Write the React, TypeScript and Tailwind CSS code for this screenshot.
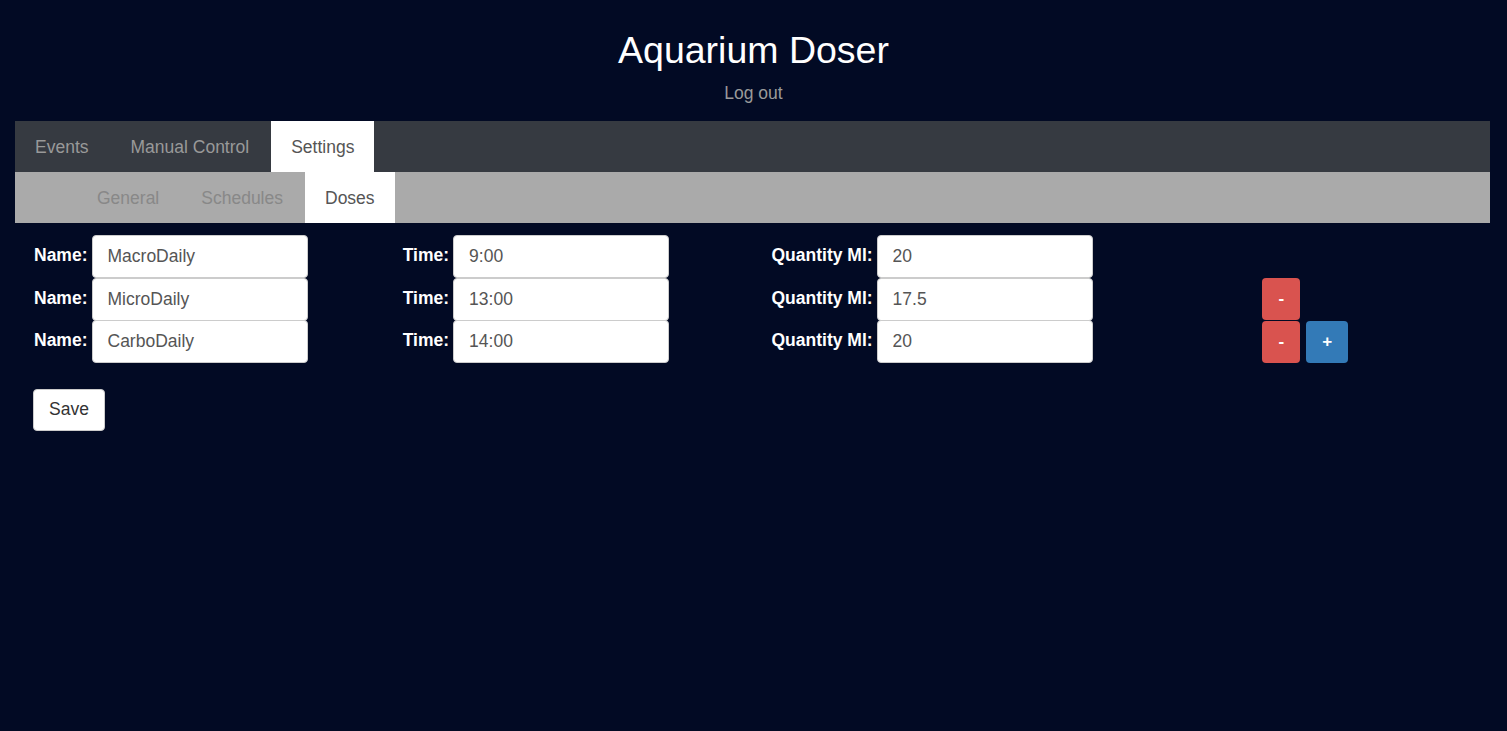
import React from "react";

const rows = [
  { name: "MacroDaily", time: "9:00", qty: "20", minus: false, plus: false },
  { name: "MicroDaily", time: "13:00", qty: "17.5", minus: true, plus: false },
  { name: "CarboDaily", time: "14:00", qty: "20", minus: true, plus: true },
];

function Field({ label, value }: { label: string; value: string }) {
  return (
    <div className="flex items-center pl-[19px]">
      <span className="font-bold text-white text-[17.5px] mr-[4px] -mt-[2px]">{label}</span>
      <input
        readOnly
        value={value}
        className="w-[216px] h-[43px] bg-white border border-[#ccc] rounded-[4px] px-[15px] text-[17.5px] text-[#555] outline-none"
      />
    </div>
  );
}

export default function App() {
  return (
    <div
      className="min-h-[731px] bg-[#020a24] pb-10"
      style={{ fontFamily: '"Liberation Sans", Arial, sans-serif' }}
    >
      <div className="text-center">
        <h1 className="pt-[30px] text-[37.5px] leading-[40px] text-white">Aquarium Doser</h1>
        <div className="mt-[10px] text-[17.5px] leading-[26px] text-[#9a9a9a]">Log out</div>
      </div>

      <div className="ml-[15px] mr-[17px] mt-[15px]">
        <div className="h-[51px] bg-[#363a41] flex gap-[2px] text-[17.5px]">
          <div className="px-5 pt-[2px] leading-[49px] text-[#999]">Events</div>
          <div className="px-5 pt-[2px] leading-[49px] text-[#999]">Manual Control</div>
          <div className="px-5 pt-[2px] leading-[49px] bg-white text-[#555]">Settings</div>
        </div>
        <div className="h-[51px] bg-[#aaaaaa] flex gap-[2px] pl-[62px] text-[17.5px]">
          <div className="px-5 pt-[2px] leading-[49px] text-[#888]">General</div>
          <div className="px-5 pt-[2px] leading-[49px] text-[#888]">Schedules</div>
          <div className="px-5 pt-[2px] leading-[49px] bg-white text-[#555]">Doses</div>
        </div>

        <div className="pt-[12px]">
          {rows.map((r, i) => (
            <div key={i} className="grid grid-cols-4 h-[42.5px]">
              <Field label="Name:" value={r.name} />
              <Field label="Time:" value={r.time} />
              <Field label="Quantity Ml:" value={r.qty} />
              <div className="flex items-center gap-[6px] pl-[141px]">
                {r.minus && (
                  <button className="w-[38px] h-[42px] rounded-[4px] bg-[#d9534f] text-white font-bold text-[17px]">
                    -
                  </button>
                )}
                {r.plus && (
                  <button className="w-[42px] h-[42px] rounded-[4px] bg-[#337ab7] text-white font-bold text-[17px]">
                    +
                  </button>
                )}
              </div>
            </div>
          ))}
        </div>

        <button className="mt-[26px] ml-[18px] w-[72px] h-[42px] bg-white border border-[#ccc] rounded-[4px] text-[17.5px] text-[#333]">
          Save
        </button>
      </div>
    </div>
  );
}
